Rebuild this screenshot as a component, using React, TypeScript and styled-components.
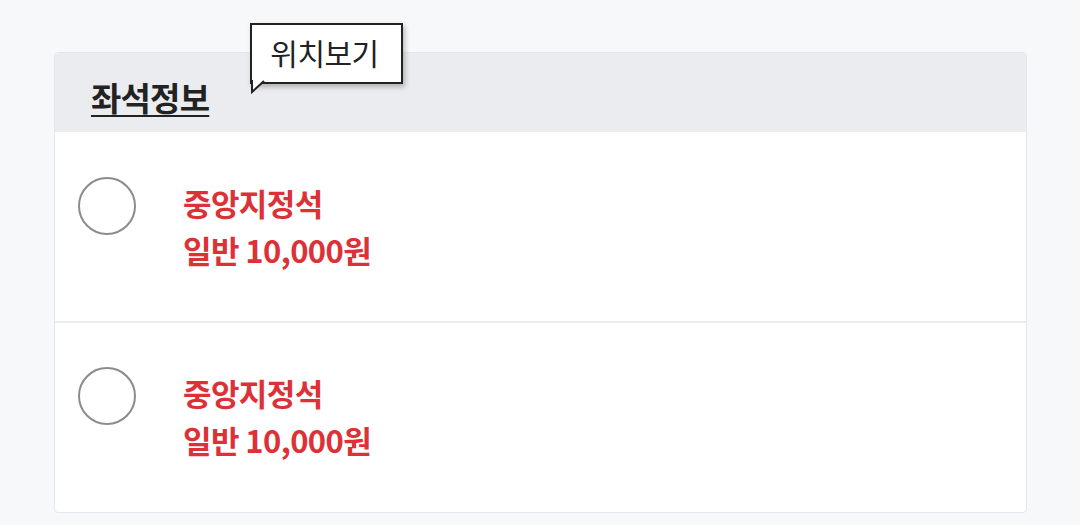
import React from 'react';
import styled, { createGlobalStyle } from 'styled-components';

const GlobalStyle = createGlobalStyle`
    html, body {
        margin: 0;
        padding: 0;
        background: #f7f8fa;
        font-family: "Noto Sans CJK KR", "Noto Sans", sans-serif;
    }
`

const Page = styled.div`
    padding: 52px 53px 0 54px;
    height: 525px;
    box-sizing: border-box;
`

const Card = styled.div`
    position: relative;
    background: #fff;
    border: 1px solid #e6e7eb;
    border-radius: 4px;
`

const Header = styled.div`
    display: flex;
    align-items: center;
    height: 79px;
    padding-left: 36px;
    background: #ebecf0;
    border-radius: 4px 4px 0 0;
`

const Title = styled.h2`
    margin: 8px 0 0;
    font-size: 33px;
    font-weight: 700;
    color: #222;
    text-decoration: underline;
    text-underline-offset: 4px;
    text-decoration-thickness: 2px;
    letter-spacing: -0.8px;
    line-height: 40px;
`

/** 위치보기 말풍선 */
const Bubble = styled.div`
    position: absolute;
    left: 195px;
    top: -30px;
    width: 153px;
    height: 61px;
    box-sizing: border-box;
    border: 2px solid #222;
    background: #fff;
    display: flex;
    align-items: center;
    justify-content: center;
    font-size: 30px;
    color: #222;
    box-shadow: 2px 3px 5px rgba(0, 0, 0, 0.25);
    padding: 0 4px 4px 0;
    letter-spacing: -0.5px;
`

const Tail = styled.svg`
    position: absolute;
    left: -2px;
    bottom: -12px;
`

const Row = styled.div`
    display: flex;
    align-items: flex-start;
    height: ${props => props.first ? '189px' : '191px'};
    box-sizing: border-box;
    padding: ${props => props.first ? '45px' : '44px'} 0 0 23px;
    border-top: ${props => props.first ? 'none' : '2px solid #ececee'};
`

const Radio = styled.span`
    width: 54px;
    height: 54px;
    border: 2px solid #8c8c8c;
    border-radius: 50%;
    flex-shrink: 0;
`

const Info = styled.div`
    display: flex;
    flex-direction: column;
    margin: 2px 0 0 47px;
`

const Line = styled.div`
    font-size: 31px;
    font-weight: 700;
    color: #dc3237;
    letter-spacing: -0.6px;
    line-height: 47px;
`

const seats = [
    { name: '중앙지정석', price: '일반 10,000원' },
    { name: '중앙지정석', price: '일반 10,000원' }
]

export default function App () {
    return (
        <Page>
            <GlobalStyle />
            <Card>
                <Header>
                    <Title>좌석정보</Title>
                </Header>
                <Bubble>
                    위치보기
                    <Tail width="16" height="14" viewBox="0 0 16 14">
                        <path d="M2 0 L2 12 L14 1" fill="#fff" stroke="#222" strokeWidth="2" />
                    </Tail>
                </Bubble>
                {seats.map((seat, i) => (
                    <Row key={i} first={i === 0}>
                        <Radio />
                        <Info>
                            <Line>{seat.name}</Line>
                            <Line>{seat.price}</Line>
                        </Info>
                    </Row>
                ))}
            </Card>
        </Page>
    );
}
